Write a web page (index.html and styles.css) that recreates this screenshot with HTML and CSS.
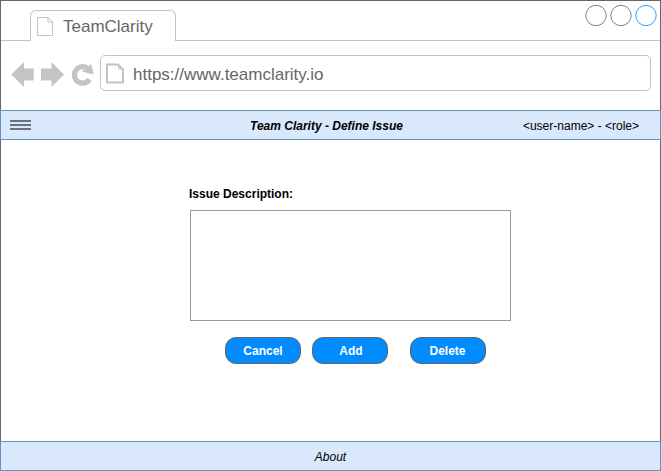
FILE: index.html
```html
<!DOCTYPE html>
<html lang="en">
<head>
<meta charset="utf-8">
<title>TeamClarity</title>
<link rel="stylesheet" href="styles.css">
</head>
<body>
<div class="window">
  <div class="tabstrip">
    <div class="tab">
      <svg class="tab-icon" width="18" height="20" viewBox="0 0 18 20" fill="none" stroke="#c4c4c4"><path d="M1.5 1.5H12L16.5 6V19.5H1.5ZM12 1.5V6H16.5"/></svg>
      <span class="tab-title">TeamClarity</span>
    </div>
    <svg class="controls" width="74" height="24" viewBox="0 0 74 24" fill="#fff" stroke="#808080"><circle cx="12" cy="12.5" r="10.2"/><circle cx="37" cy="12.5" r="10.2"/><circle cx="62" cy="12.5" r="10.2" stroke="#3399ff"/></svg>
  </div>
  <div class="toolbar">
    <svg class="nav" width="86" height="28" viewBox="0 0 86 28"><g fill="#c4c4c4"><path d="M0.300 14.500L13 2V8.500H22.700V20.500H13V27Z"/><path d="M53 14.500L40.500 2V8.500H30V20.500H40.500V27Z"/><path d="M82.700 14.500L70.700 11.500L80.300 4Z"/></g><path d="M77.300 8.700A8.300 8.300 0 1 0 78.600 19.600" fill="none" stroke="#c4c4c4" stroke-width="5.300"/></svg>
    <div class="address">
      <svg class="page-icon" width="20" height="22" viewBox="0 0 20 22" fill="none" stroke="#c4c4c4"><path stroke-width="2" d="M2 1.500H13L18 6.500V19.500H2Z"/><path d="M13.500 1.500V6H18"/></svg>
      <span class="url">https://www.teamclarity.io</span>
    </div>
  </div>
  <header class="bar header">
    <svg class="menu" width="21" height="10" viewBox="0 0 21 10" fill="#6c7079"><path d="M0 0H21V2H0ZM0 4H21V6H0ZM0 8H21V10H0Z"/></svg>
    <span class="title">Team Clarity - Define Issue</span>
    <span class="user">&lt;user-name&gt; - &lt;role&gt;</span>
  </header>
  <main class="content">
    <label class="label" for="description"><span>Issue Description:</span></label>
    <textarea class="description" id="description"></textarea>
    <div class="actions">
      <button class="button">Cancel</button>
      <button class="button add">Add</button>
      <button class="button delete">Delete</button>
    </div>
  </main>
  <footer class="bar footer"><span class="about">About</span></footer>
</div>
</body>
</html>
```
FILE: styles.css
```css
* { box-sizing: border-box; }
body { margin: 0; font-family: "Liberation Sans", Arial, sans-serif; font-size: 12px; color: #000; }
svg { display: block; flex: none; }
span { white-space: nowrap; }
.window { width: 661px; height: 471px; display: flex; flex-direction: column; border: 1px solid #666; border-bottom: 0; background: #fff; }
.tabstrip { height: 40px; flex: none; display: flex; justify-content: space-between; align-items: flex-start; padding: 9px 2px 0 29px; border-bottom: 1px solid #c4c4c4; }
.tab { width: 146px; height: 31px; display: flex; padding: 5px 0 0 5px; border: 1px solid #c4c4c4; border-bottom: 0; border-radius: 6px 6px 0 0; background: #fff; }
.tab-title { margin-left: 9px; font-size: 17px; line-height: 22px; color: #666; }
.controls { margin-top: -7px; }
.toolbar { height: 69px; flex: none; display: flex; padding: 14px 9px 0 10px; }
.nav { margin: 5px 3px 0 0; }
.address { width: 551px; height: 36px; display: flex; padding: 7px 0 0 4px; border: 1px solid #c4c4c4; border-radius: 5px; }
.url { margin-left: 8px; font-size: 17px; line-height: 24px; color: #666; }
.bar { height: 30px; flex: none; margin: 0 -1px; background: #dae8fc; border: 1px solid #6c8ebf; }
.header { display: flex; align-items: center; padding: 2px 21px 0 9px; }
.menu { margin-top: -2px; }
.title { margin-left: 219px; font-weight: bold; font-style: italic; }
.user { margin-left: auto; }
.content { flex: 1; padding: 46px 0 0 188px; }
.label { display: block; height: 24px; line-height: 16px; font-weight: bold; }
.description { display: block; width: 321px; height: 111px; margin-left: 1px; padding: 6px; border: 1px solid #999; border-radius: 0; resize: none; outline: 0; background: #fff; font: inherit; }
.actions { display: flex; gap: 11px; margin: 16px 0 0 36px; }
.button { width: 76px; height: 27px; padding: 0; border: 1px solid #666; border-radius: 11px; background: #008cff; color: #fff; font: bold 12px "Liberation Sans", Arial, sans-serif; }
.add { padding-left: 2px; }
.delete { margin-left: 11px; padding-right: 1px; }
.footer { display: flex; align-items: center; justify-content: center; padding-top: 2px; font-style: italic; }
```
